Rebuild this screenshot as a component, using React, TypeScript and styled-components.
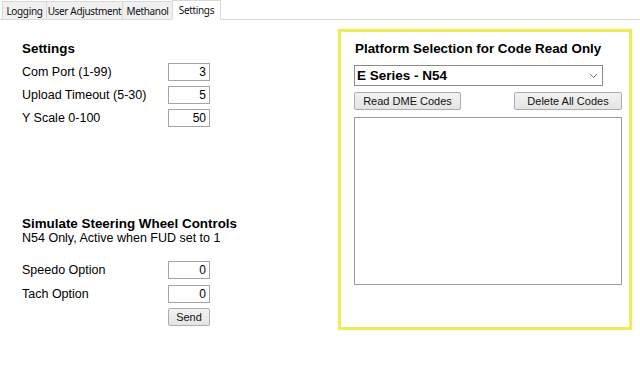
import React from 'react'
import styled, { createGlobalStyle } from 'styled-components'

const Global = createGlobalStyle`
  html, body { margin: 0; padding: 0; background: #fff; }
  body { font-family: "Liberation Sans", Arial, sans-serif; color: #000; }
`

const Page = styled.div`
  width: 640px;
  height: 388px;
  overflow: hidden;
  background: #fff;
`

const TabBar = styled.div`
  display: flex;
  align-items: flex-end;
  height: 20px;
  padding-left: 3px;
  border-bottom: 1px solid #d9d9d9;
  box-sizing: border-box;
`

const Tab = styled.div<{ active?: boolean; w: number }>`
  flex: 0 0 ${(p) => p.w}px;
  height: ${(p) => (p.active ? 20 : 18)}px;
  margin-bottom: ${(p) => (p.active ? -1 : 0)}px;
  box-sizing: border-box;
  display: flex;
  align-items: center;
  justify-content: center;
  white-space: nowrap;
  font-family: "Noto Sans", sans-serif;
  font-size: 10px;
  letter-spacing: -0.35px;
  color: #111;
  background: ${(p) => (p.active ? '#fff' : '#f0f0f0')};
  border: 1px solid #d9d9d9;
  border-bottom: ${(p) => (p.active ? '1px solid #fff' : 'none')};
  margin-left: -1px;
`

const Content = styled.div`
  display: flex;
  padding: 9px 0 0 22px;
`

const LeftCol = styled.div`
  width: 316px;
  display: flex;
  flex-direction: column;
`

const Heading = styled.div<{ top: number }>`
  font-weight: bold;
  font-size: 13.4px;
  margin-top: ${(p) => p.top}px;
  line-height: 15px;
`

const Note = styled.div`
  font-size: 12.5px;
  line-height: 15px;
`

const Row = styled.div<{ top: number }>`
  display: flex;
  align-items: center;
  margin-top: ${(p) => p.top}px;
  height: 18px;
`

const Label = styled.div`
  width: 146px;
  font-size: 12.5px;
`

const NumBox = styled.div`
  width: 42px;
  height: 18px;
  box-sizing: border-box;
  border: 1px solid #a5a5a5;
  font-size: 12px;
  text-align: right;
  padding-right: 3px;
  line-height: 16px;
`

const Button = styled.div<{ w: number }>`
  width: ${(p) => p.w}px;
  height: 18px;
  box-sizing: border-box;
  border: 1px solid #adadad;
  border-radius: 2px;
  background: linear-gradient(#f3f3f3, #e4e4e4);
  font-size: 11px;
  line-height: 16px;
  text-align: center;
  color: #111;
`

const SendRow = styled.div`
  margin: 5px 0 0 146px;
`

const Panel = styled.div`
  width: 294px;
  height: 301px;
  box-sizing: border-box;
  border: 3px solid #efeb5e;
  box-shadow: 0 0 2px #f5f29a;
  padding: 9px 8px 0 13px;
  display: flex;
  flex-direction: column;
`

const PanelTitle = styled.div`
  font-weight: bold;
  font-size: 13.4px;
  line-height: 15px;
  margin-left: 1px;
`

const Combo = styled.div`
  margin-top: 9px;
  width: 249px;
  height: 21px;
  box-sizing: border-box;
  border: 1px solid #8a8a8a;
  display: flex;
  align-items: center;
  justify-content: space-between;
  padding: 0 4px 0 2px;
  font-size: 13.5px;
  font-weight: bold;
`

const ButtonRow = styled.div`
  display: flex;
  justify-content: space-between;
  width: 268px;
  margin-top: 6px;
`

const ListBox = styled.div`
  margin-top: 7px;
  width: 268px;
  height: 168px;
  box-sizing: border-box;
  border: 1px solid #9a9a9a;
  background: #fff;
`

function Chevron() {
  return (
    <svg width="9" height="6" viewBox="0 0 9 6">
      <path d="M1 1 L4.5 4.5 L8 1" fill="none" stroke="#777" strokeWidth="1" />
    </svg>
  )
}

function Field({ label, value, top }: { label: string; value: string; top: number }) {
  return (
    <Row top={top}>
      <Label>{label}</Label>
      <NumBox>{value}</NumBox>
    </Row>
  )
}

export default function App() {
  return (
    <Page>
      <Global />
      <TabBar>
        <Tab w={45}>Logging</Tab>
        <Tab w={77}>User Adjustment</Tab>
        <Tab w={51}>Methanol</Tab>
        <Tab w={49} active>Settings</Tab>
      </TabBar>
      <Content>
        <LeftCol>
          <Heading top={12}>Settings</Heading>
          <Field label="Com Port (1-99)" value="3" top={7} />
          <Field label="Upload Timeout (5-30)" value="5" top={5} />
          <Field label="Y Scale 0-100" value="50" top={5} />
          <Heading top={89}>Simulate Steering Wheel Controls</Heading>
          <Note>N54 Only, Active when FUD set to 1</Note>
          <Field label="Speedo Option" value="0" top={15} />
          <Field label="Tach Option" value="0" top={6} />
          <SendRow>
            <Button w={42}>Send</Button>
          </SendRow>
        </LeftCol>
        <Panel>
          <PanelTitle>Platform Selection for Code Read Only</PanelTitle>
          <Combo>
            <span>E Series - N54</span>
            <Chevron />
          </Combo>
          <ButtonRow>
            <Button w={107}>Read DME Codes</Button>
            <Button w={108}>Delete All Codes</Button>
          </ButtonRow>
          <ListBox />
        </Panel>
      </Content>
    </Page>
  )
}
